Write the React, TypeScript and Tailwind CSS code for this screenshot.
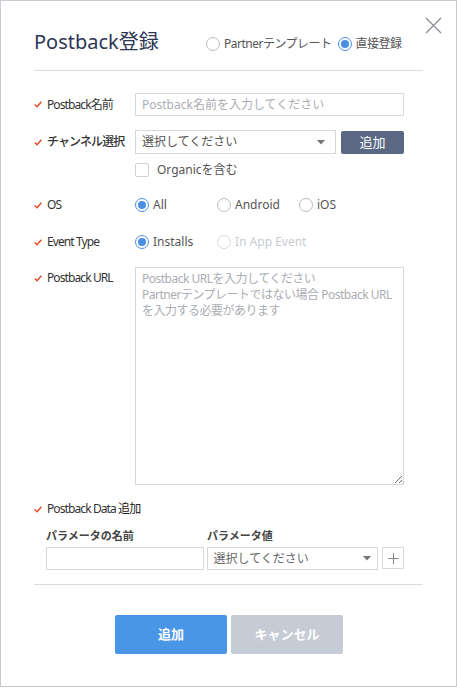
import React from "react";

function Check() {
  return (
    <svg width="8" height="7" viewBox="0 0 8 7" className="shrink-0">
      <polyline points="0.8,3.6 3,5.8 7.4,0.8" fill="none" stroke="#e5461f" strokeWidth="1.4" />
    </svg>
  );
}

function Radio({ checked, disabled, label }: { checked?: boolean; disabled?: boolean; label: string }) {
  return (
    <div className="flex items-center gap-[4px]">
      <span
        className={
          checked
            ? "w-[14px] h-[14px] rounded-full border border-[#4a90e2] flex items-center justify-center bg-white"
            : disabled
            ? "w-[14px] h-[14px] rounded-full border border-[#d6d8dc] bg-white"
            : "w-[14px] h-[14px] rounded-full border border-[#b9bcc2] bg-white"
        }
      >
        {checked && <span className="w-[8px] h-[8px] rounded-full bg-[#4a90e2]" />}
      </span>
      <span className={disabled ? "text-[#c9ccd1]" : "text-[#555]"}>{label}</span>
    </div>
  );
}

function Caret() {
  return (
    <svg width="8" height="5" viewBox="0 0 8 5">
      <polygon points="0,0 8,0 4,4.5" fill="#777" />
    </svg>
  );
}

function Label({ children, className = "" }: { children: React.ReactNode; className?: string }) {
  return (
    <div className={"w-[101px] shrink-0 flex items-center gap-[5px] " + className}>
      <Check />
      <span className="text-[12px] tracking-[-0.9px] text-[#333] leading-[16px]">{children}</span>
    </div>
  );
}

export default function App() {
  return (
    <div className="w-[458px] h-[688px] bg-white font-['Noto_Sans','Noto_Sans_CJK_JP',sans-serif]">
      <div className="relative w-[457px] h-[687px] border border-[#c8cbd2] bg-white px-[33px] pt-[24px]">
        {/* close */}
        <svg className="absolute left-[424px] top-[16px]" width="17" height="17" viewBox="0 0 17 17">
          <path d="M1 1 L16 16 M16 1 L1 16" stroke="#8a8d93" strokeWidth="1.3" fill="none" />
        </svg>

        {/* header */}
        <div className="h-[34px] flex items-center">
          <h1 className="text-[20px] text-[#2c3654] leading-[28px] w-[172px]">Postback登録</h1>
          <div className="flex items-center gap-[6px] text-[12px] tracking-[-0.5px] mt-[3px]">
            <Radio label="Partnerテンプレート" />
            <Radio checked label="直接登録" />
          </div>
        </div>
        <div className="mt-[11px] border-t border-[#d9dce2]" />

        {/* form */}
        <div className="pr-[19px]">
          <div className="mt-[22px] flex h-[23px]">
            <Label>Postback名前</Label>
            <div className="flex-1 border border-[#d5d8dd] flex items-center px-[6px] text-[12px] text-[#aaadb2]">
              Postback名前を入力してください
            </div>
          </div>

          <div className="mt-[14px] flex h-[24px]">
            <Label>
              <span className="font-medium">チャンネル選択</span>
            </Label>
            <div className="w-[202px] border border-[#d5d8dd] flex items-center justify-between pl-[6px] pr-[10px] text-[12px] text-[#555]">
              <span>選択してください</span>
              <Caret />
            </div>
            <div className="ml-[5px] w-[63px] h-[23px] mt-[1px] rounded-[2px] bg-[#5b6883] text-white text-[13px] flex items-center justify-center">
              追加
            </div>
          </div>

          <div className="mt-[9px] flex items-center h-[14px] pl-[101px]">
            <span className="w-[14px] h-[14px] border border-[#cfd2d7] rounded-[2px]" />
            <span className="ml-[8px] text-[12px] text-[#555]">Organicを含む</span>
          </div>

          <div className="mt-[21px] flex items-center h-[14px]">
            <Label>OS</Label>
            <div className="flex items-center text-[12px]">
              <div className="w-[82px]"><Radio checked label="All" /></div>
              <div className="w-[82px]"><Radio label="Android" /></div>
              <Radio label="iOS" />
            </div>
          </div>

          <div className="mt-[23px] flex items-center h-[14px]">
            <Label>Event Type</Label>
            <div className="flex items-center text-[12px]">
              <div className="w-[82px]"><Radio checked label="Installs" /></div>
              <Radio disabled label="In App Event" />
            </div>
          </div>

          <div className="mt-[18px] flex">
            <Label className="self-start pt-[3px]">Postback URL</Label>
            <textarea
              className="flex-1 h-[218px] border border-[#d5d8dd] px-[6px] pt-[3px] text-[12px] leading-[16px] tracking-[-0.5px] outline-none whitespace-pre placeholder:text-[#aaadb2]"
              placeholder={"Postback URLを入力してください\nPartnerテンプレートではない場合 Postback URL\nを入力する必要があります"}
            />
          </div>

          <div className="mt-[16px] flex h-[16px] items-center">
            <Label>
              <span className="whitespace-nowrap">
                Postback Data <span className="text-[#222]">追加</span>
              </span>
            </Label>
          </div>

          <div className="mt-[12px] flex h-[14px] items-center pl-[12px] text-[11px] font-bold text-[#444] leading-[14px]">
            <div className="w-[161px]">パラメータの名前</div>
            <div>パラメータ値</div>
          </div>

          <div className="mt-[4px] flex h-[23px] pl-[12px]">
            <div className="w-[158px] border border-[#d5d8dd]" />
            <div className="ml-[3px] w-[172px] border border-[#d5d8dd] flex items-center justify-between pl-[6px] pr-[6px] text-[12px] text-[#666]">
              <span>選択してください</span>
              <Caret />
            </div>
            <div className="ml-[4px] w-[22px] h-[22px] border border-[#d5d8dd] flex items-center justify-center">
              <svg width="11" height="11" viewBox="0 0 11 11">
                <path d="M5.5 0 V11 M0 5.5 H11" stroke="#888" strokeWidth="1" />
              </svg>
            </div>
          </div>
        </div>

        <div className="mt-[14px] border-t border-[#d9dce2]" />

        <div className="mt-[30px] flex justify-center gap-[4px] pl-[1px]">
          <div className="w-[112px] h-[39px] rounded-[2px] bg-[#4a96e6] text-white text-[13px] font-bold flex items-center justify-center">
            追加
          </div>
          <div className="w-[112px] h-[39px] rounded-[2px] bg-[#c5ccd5] text-white text-[13px] font-bold flex items-center justify-center">
            キャンセル
          </div>
        </div>
      </div>
    </div>
  );
}
